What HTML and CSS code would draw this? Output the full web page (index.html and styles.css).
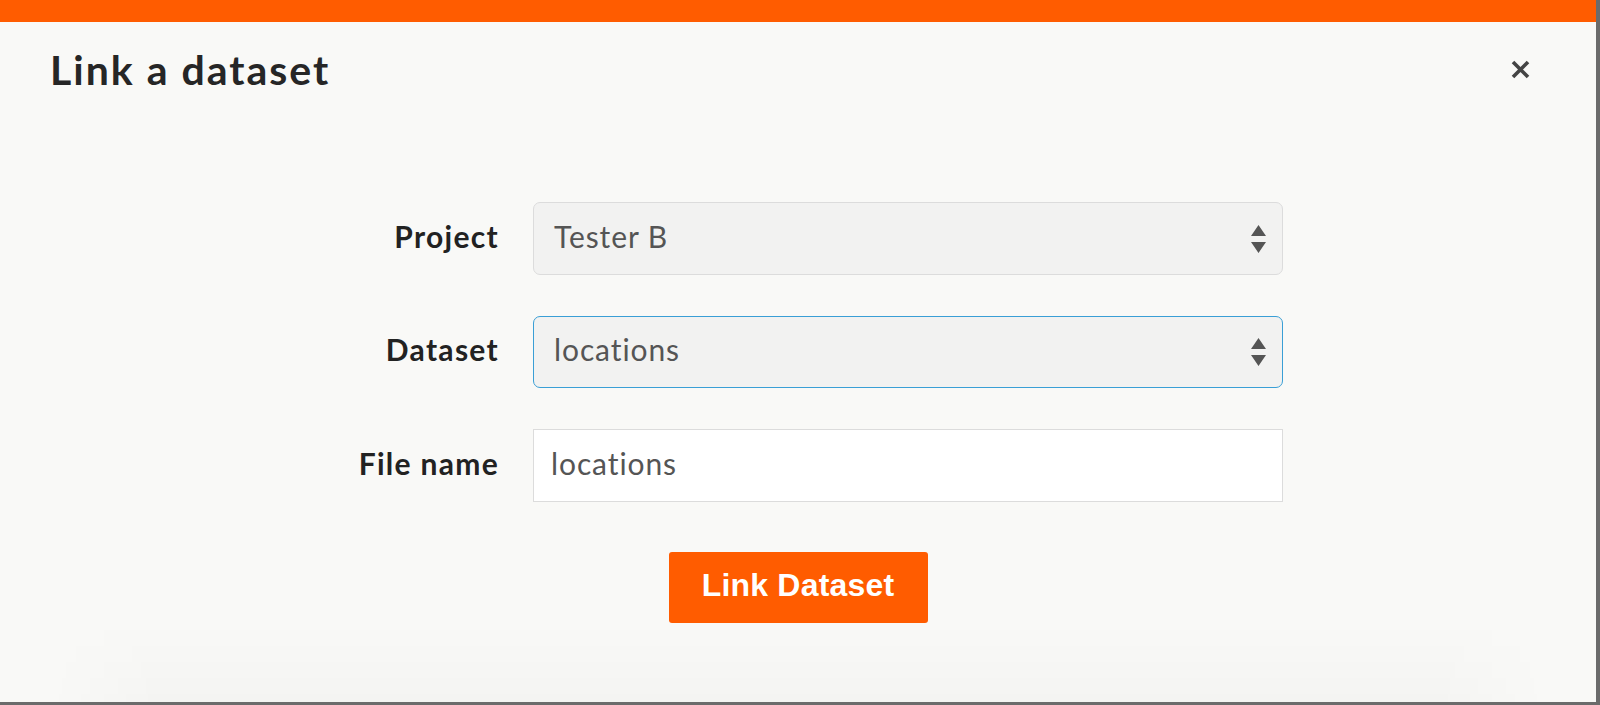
FILE: index.html
```html
<!DOCTYPE html>
<html lang="en">
<head>
<meta charset="utf-8">
<title>Link a dataset</title>
<link rel="stylesheet" href="styles.css">
</head>
<body>
<div class="modal">
  <div class="topbar"></div>
  <div class="header">
    <h1 class="title">Link a dataset</h1>
    <button class="close" aria-label="Close">
      <svg width="19" height="19" viewBox="0 0 19 19"><path d="M2 2 L17 17 M17 2 L2 17" stroke="#444" stroke-width="3.6" stroke-linecap="butt"/></svg>
    </button>
  </div>
  <form class="form">
    <label class="label">Project</label>
    <div class="select">
      <span class="value">Tester B</span>
      <span class="arrows"><svg width="15" height="28" viewBox="0 0 15 28"><path d="M7.5 0 L15 11 L0 11 Z M0 17 L15 17 L7.5 28 Z" fill="#555"/></svg></span>
    </div>
    <label class="label">Dataset</label>
    <div class="select focus">
      <span class="value">locations</span>
      <span class="arrows"><svg width="15" height="28" viewBox="0 0 15 28"><path d="M7.5 0 L15 11 L0 11 Z M0 17 L15 17 L7.5 28 Z" fill="#555"/></svg></span>
    </div>
    <label class="label">File name</label>
    <div class="input"><span class="value">locations</span></div>
  </form>
  <div class="actions">
    <button class="btn" type="button">Link Dataset</button>
  </div>
  <div class="shade"></div>
</div>
</body>
</html>
```

FILE: styles.css
```css
html, body {
  margin: 0;
  padding: 0;
  height: 100%;
}
body {
  background: #6b6b6b;
  overflow: hidden;
  font-family: Lato, "Open Sans", sans-serif;
}
.modal {
  position: relative;
  width: 1596px;
  height: 702px;
  background: #f9f9f7;
  display: flex;
  flex-direction: column;
}
.topbar {
  height: 22px;
  background: #ff5c00;
}
.header {
  display: flex;
  justify-content: space-between;
  align-items: flex-start;
  padding: 0 66px 0 50px;
}
.title {
  margin: 24px 0 0;
  font-size: 41px;
  line-height: 48px;
  font-weight: 700;
  color: #262626;
  letter-spacing: 2px;
}
.close {
  margin-top: 38px;
  padding: 0;
  border: 0;
  background: none;
  width: 19px;
  height: 19px;
  display: flex;
}
.form {
  margin-top: 108px;
  display: grid;
  grid-template-columns: 199px 750px;
  column-gap: 34px;
  row-gap: 41px;
  padding-left: 300px;
  align-items: center;
}
.label {
  text-align: right;
  font-size: 30px;
  font-weight: 700;
  color: #222;
  letter-spacing: 1.3px;
  padding-bottom: 6px;
}
.select, .input {
  box-sizing: border-box;
  height: 73px;
  display: flex;
  align-items: center;
  font-size: 30px;
  color: #555;
  letter-spacing: 0.9px;
}
.select {
  background: #f2f2f1;
  border: 1px solid #dcdcdc;
  border-radius: 7px;
  padding: 0 16px 0 20px;
  justify-content: space-between;
}
.select.focus {
  border: 1.5px solid #3a9fd6;
  height: 72px;
}
.input {
  background: #fff;
  border: 1.5px solid #dcdcdc;
  padding: 0 17px;
}
.value {
  padding-bottom: 6px;
}
.arrows {
  display: flex;
}
.actions {
  margin-top: 50px;
  display: flex;
  justify-content: center;
}
.btn {
  width: 259px;
  height: 71px;
  border: 0;
  border-radius: 3px;
  background: #ff5c00;
  color: #fff;
  font-family: "Liberation Sans", Arial, sans-serif;
  font-weight: 700;
  font-size: 32px;
  letter-spacing: 0.2px;
  padding: 0 0 4px;
}
.shade {
  position: absolute;
  left: 0;
  right: 0;
  bottom: 0;
  height: 80px;
  background: linear-gradient(to bottom, rgba(0,0,0,0), rgba(0,0,0,0.02));
  -webkit-mask-image: linear-gradient(to right, transparent 3%, #000 10%, #000 90%, transparent 97%);
  mask-image: linear-gradient(to right, transparent 3%, #000 10%, #000 90%, transparent 97%);
  pointer-events: none;
}
```
